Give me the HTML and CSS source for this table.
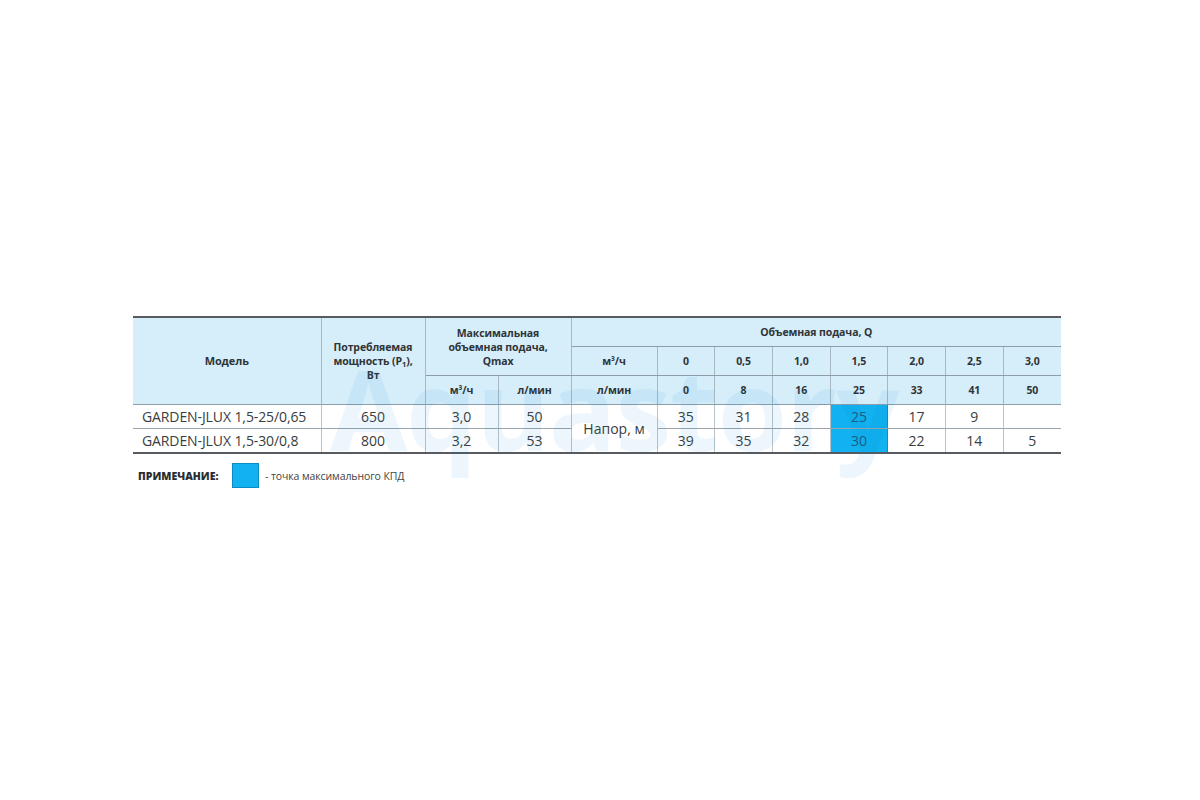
FILE: index.html
```html
<!DOCTYPE html>
<html lang="ru">
<head>
<meta charset="utf-8">
<title>GARDEN-JLUX</title>
<link rel="stylesheet" href="styles.css">
</head>
<body>
<div class="page">
  <div class="sheet">
    <table class="spec">
      <colgroup>
        <col class="c-model"><col class="c-power"><col class="c-q"><col class="c-q">
        <col class="c-unit">
        <col class="c-v"><col class="c-v"><col class="c-v"><col class="c-v"><col class="c-v"><col class="c-v"><col class="c-v">
      </colgroup>
      <thead>
        <tr class="h1">
          <th rowspan="3">Модель</th>
          <th rowspan="3">Потребляемая<br>мощность (P<sub>1</sub>),<br>Вт</th>
          <th colspan="2" rowspan="2">Максимальная<br>объемная подача,<br>Qmax</th>
          <th colspan="8">Объемная подача, Q</th>
        </tr>
        <tr class="h2">
          <th>м³/ч</th><th>0</th><th>0,5</th><th>1,0</th><th>1,5</th><th>2,0</th><th>2,5</th><th>3,0</th>
        </tr>
        <tr class="h3">
          <th>м³/ч</th><th>л/мин</th><th>л/мин</th><th>0</th><th>8</th><th>16</th><th>25</th><th>33</th><th>41</th><th>50</th>
        </tr>
      </thead>
      <tbody>
        <tr>
          <td class="model">GARDEN-JLUX 1,5-25/0,65</td><td>650</td><td>3,0</td><td>50</td>
          <td rowspan="2">Напор, м</td>
          <td>35</td><td>31</td><td>28</td><td class="best">25</td><td>17</td><td>9</td><td></td>
        </tr>
        <tr>
          <td class="model">GARDEN-JLUX 1,5-30/0,8</td><td>800</td><td>3,2</td><td>53</td>
          <td>39</td><td>35</td><td>32</td><td class="best">30</td><td>22</td><td>14</td><td>5</td>
        </tr>
      </tbody>
    </table>
    <div class="watermark">Aquastory</div>
  </div>
  <div class="note">
    <span class="note-label">ПРИМЕЧАНИЕ:</span>
    <span class="note-swatch"></span>
    <span class="note-text">- точка максимального КПД</span>
  </div>
</div>
</body>
</html>
```

FILE: styles.css
```css
html, body {
  margin: 0;
  padding: 0;
  background: #ffffff;
}
body {
  font-family: "Open Sans", "Noto Sans", sans-serif;
  color: #333;
}
.page {
  width: 1200px;
  height: 800px;
  padding: 316px 0 0 133px;
  box-sizing: border-box;
}
.sheet {
  position: relative;
  width: 928px;
}
.spec {
  border-collapse: collapse;
  table-layout: fixed;
  width: 928px;
  border-top: 2px solid #555b60;
  border-bottom: 2px solid #555b60;
}
.c-model { width: 188px; }
.c-power { width: 104px; }
.c-q { width: 73px; }
.c-unit { width: 86px; }
.c-v { width: 57.7px; }

.spec th {
  background: #d6eefa;
  font-size: 10.5px;
  font-weight: 700;
  color: #2f3438;
  line-height: 14px;
  padding: 0;
  text-align: center;
  vertical-align: middle;
  border: 1px solid #a8b8c2;
  border-top-color: #8e9ea8;
  border-bottom-color: #8e9ea8;
  letter-spacing: -0.1px;
}
.spec tr.h1 th:first-child { font-size: 11px; }
.spec th sub {
  font-size: 7.5px;
  line-height: 0;
  vertical-align: -2px;
}
.spec tr.h1 th, .spec tr.h2 th, .spec tr.h3 th {
  height: 28px;
}
.spec tr > :first-child { border-left: none; }
.spec tr > :last-child { border-right: none; }
.spec tr.h2 th:last-child, .spec tr.h3 th:last-child { border-right: none; }

.spec td {
  font-size: 14px;
  color: #3a3d40;
  text-align: center;
  vertical-align: middle;
  height: 23px;
  padding: 0;
  line-height: 16px;
  border: 1px solid #b9c4ca;
  border-top-color: #8e9ea8;
  border-bottom-color: #9aa4aa;
}
.spec td.model {
  text-align: left;
  padding-left: 9px;
  letter-spacing: -0.1px;
}
.spec td.best {
  background: #12b1ef;
  color: #1d5b80;
  border-left-color: #0a8fc6;
  border-right-color: #0a8fc6;
}
.spec tbody tr:last-child td { border-bottom-color: #555b60; }

.watermark {
  position: absolute;
  left: 197px;
  top: 36px;
  font-family: "Open Sans", sans-serif;
  font-weight: 700;
  font-size: 112px;
  line-height: 1;
  color: rgba(0, 140, 215, 0.075);
  pointer-events: none;
  letter-spacing: -1px;
}

.note {
  display: flex;
  align-items: center;
  margin-top: 9px;
  padding-left: 5px;
}
.note-label {
  font-size: 10.5px;
  font-weight: 800;
  color: #2b2e31;
  width: 94px;
}
.note-swatch {
  width: 25px;
  height: 23px;
  background: #12b1ef;
  border: 1px solid #0a8cc2;
}
.note-text {
  font-size: 10.5px;
  color: #444;
  margin-left: 6px;
  letter-spacing: -0.1px;
}
```
